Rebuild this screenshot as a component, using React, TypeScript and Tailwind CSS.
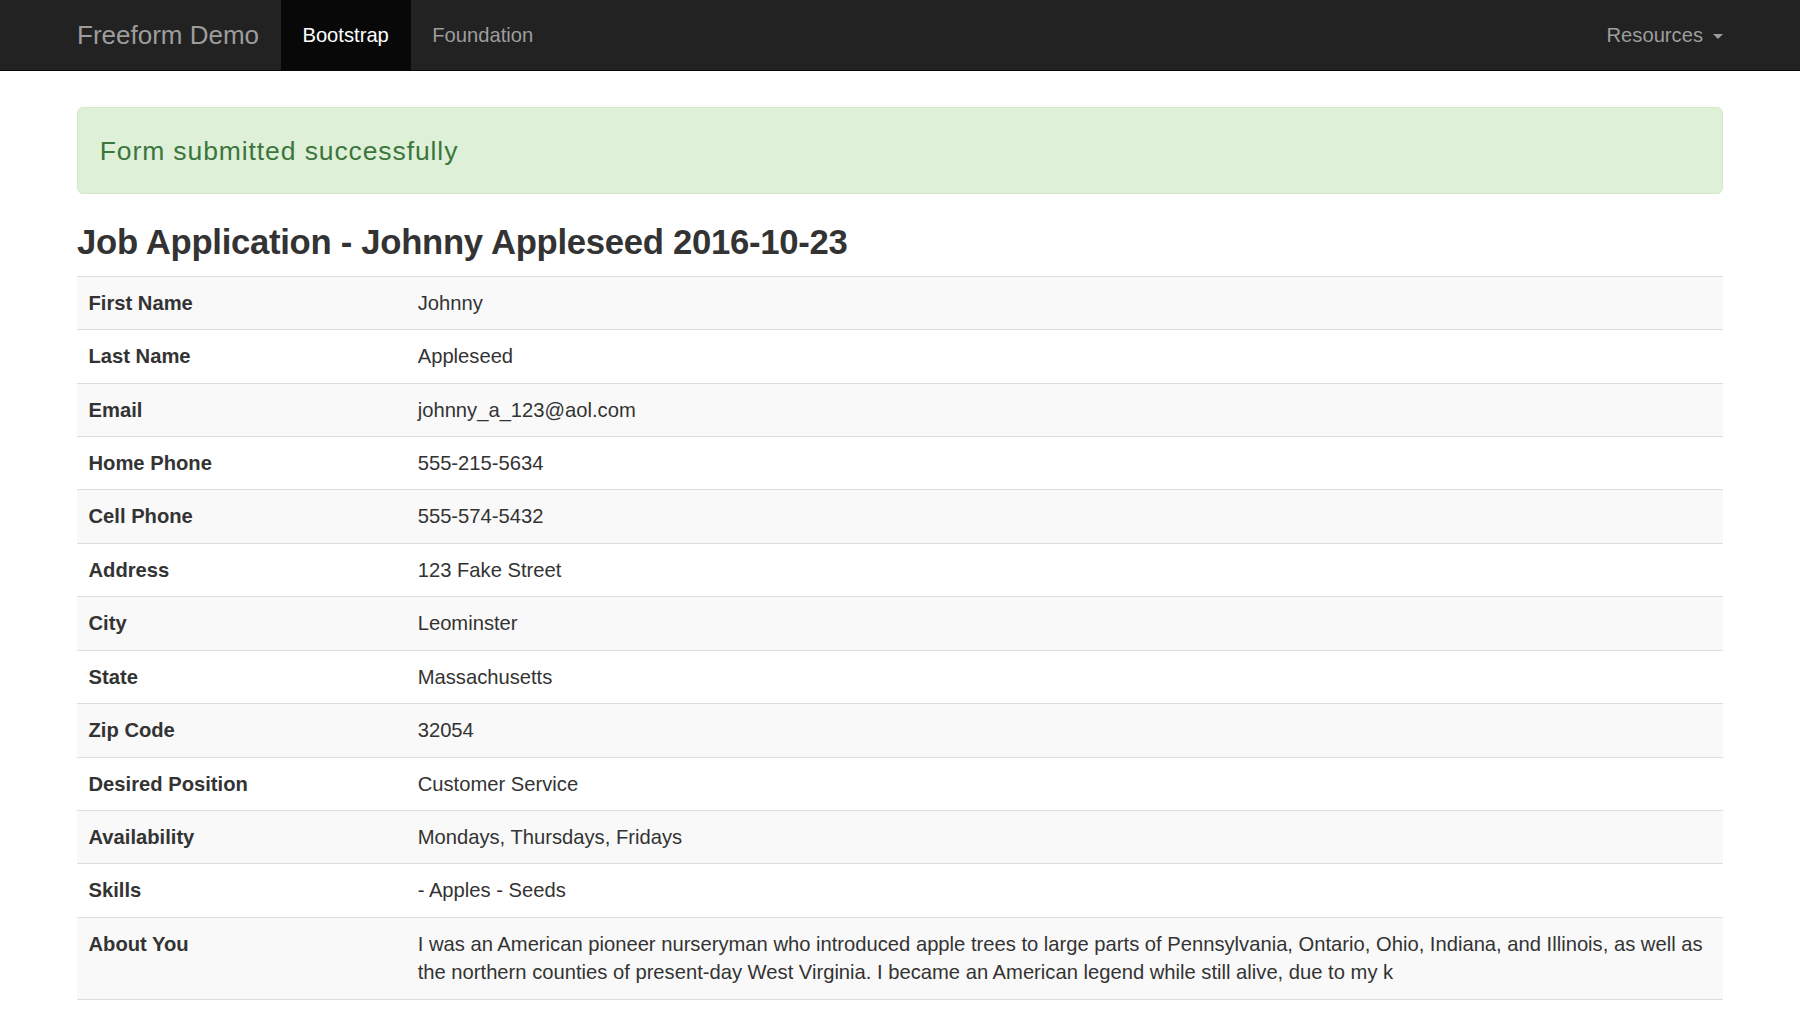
import React from "react";

const rows: [string, string][] = [
  ["First Name", "Johnny"],
  ["Last Name", "Appleseed"],
  ["Email", "johnny_a_123@aol.com"],
  ["Home Phone", "555-215-5634"],
  ["Cell Phone", "555-574-5432"],
  ["Address", "123 Fake Street"],
  ["City", "Leominster"],
  ["State", "Massachusetts"],
  ["Zip Code", "32054"],
  ["Desired Position", "Customer Service"],
  ["Availability", "Mondays, Thursdays, Fridays"],
  ["Skills", "- Apples - Seeds"],
  [
    "About You",
    "I was an American pioneer nurseryman who introduced apple trees to large parts of Pennsylvania, Ontario, Ohio, Indiana, and Illinois, as well as the northern counties of present-day West Virginia. I became an American legend while still alive, due to my k",
  ],
];

const App = () => {
  return (
    <div className="min-h-screen bg-white font-['Liberation_Sans',Arial,sans-serif] text-[#333]">
      {/* Navbar */}
      <nav className="bg-[#222] border-b border-[#080808]">
        <div className="w-[1646px] mx-auto flex items-stretch h-[70px]">
          <a className="flex items-center pr-[21.7px] text-[26px] text-[#9d9d9d]">
            Freeform Demo
          </a>
          <a className="flex items-center px-[21.7px] bg-[#080808] text-white text-[20.2px]">
            Bootstrap
          </a>
          <a className="flex items-center px-[21.7px] text-[#9d9d9d] text-[20.2px]">
            Foundation
          </a>
          <a className="ml-auto -mr-[21.7px] flex items-center px-[21.7px] text-[#9d9d9d] text-[20.2px]">
            Resources
            <span className="ml-[10px] mt-[2px] w-0 h-0 border-t-[5px] border-t-[#9d9d9d] border-x-[5px] border-x-transparent" />
          </a>
        </div>
      </nav>

      <main className="w-[1646px] mx-auto pt-[36px]">
        {/* Alert */}
        <div className="rounded-[6px] border border-[#d6e9c6] bg-[#dff0d8] px-[21.7px] py-[21.7px] text-[#3c763d]">
          <p className="text-[26.5px] leading-[42px] font-light tracking-[0.9px]">
            Form submitted successfully
          </p>
        </div>

        <h3 className="mt-[28.9px] mb-[14.4px] text-[34.7px] leading-[38.2px] font-bold tracking-[-0.3px] text-[#333]">
          Job Application - Johnny Appleseed 2016-10-23
        </h3>

        <table className="w-full border-collapse border-b border-[#ddd] text-[20.2px]">
          <tbody>
            {rows.map(([label, value], i) => (
              <tr key={label} className={i % 2 === 0 ? "bg-[#f9f9f9]" : ""}>
                <th className="w-1/5 text-left align-top font-bold border-t border-[#ddd] px-[11.5px] py-3 leading-[28.4px]">
                  {label}
                </th>
                <td className="align-top border-t border-[#ddd] px-[11.5px] py-3 leading-[28.4px]">
                  {value}
                </td>
              </tr>
            ))}
          </tbody>
        </table>
      </main>
    </div>
  );
};

export default App;
